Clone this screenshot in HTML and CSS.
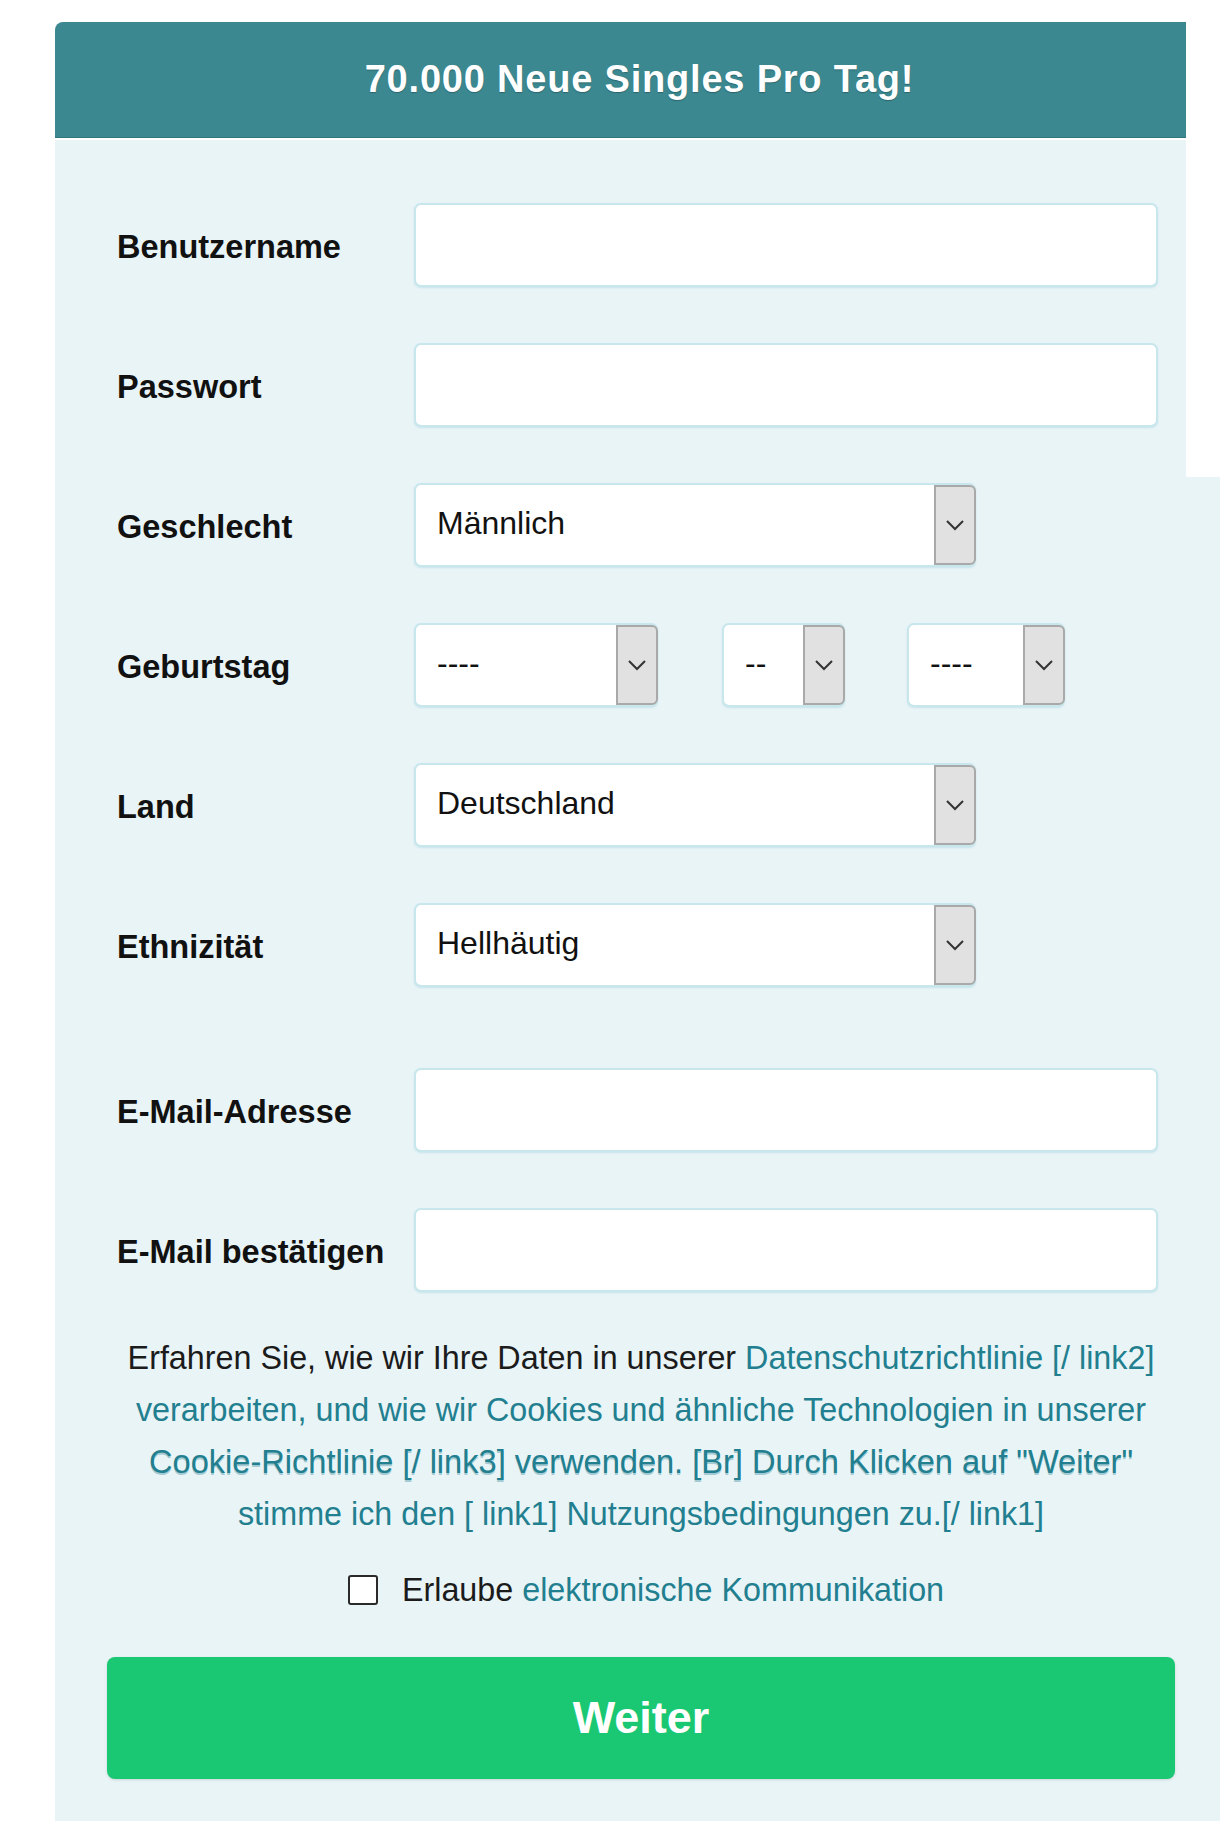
FILE: index.html
```html
<!DOCTYPE html>
<html lang="de">
<head>
<meta charset="utf-8">
<title>Registrierung</title>
<link rel="stylesheet" href="styles.css">
</head>
<body>
<div class="screen">
  <div class="card">
    <div class="card-header">70.000 Neue Singles Pro Tag!</div>
    <div class="card-body">
      <form class="form">
        <div class="row">
          <label class="label">Benutzername</label>
          <div class="input"></div>
        </div>
        <div class="row">
          <label class="label">Passwort</label>
          <div class="input"></div>
        </div>
        <div class="row">
          <label class="label">Geschlecht</label>
          <div class="select select-wide">
            <span class="value">Männlich</span>
            <span class="arrow"><svg width="20" height="12" viewBox="0 0 20 12"><path d="M2 2 L10 10 L18 2" fill="none" stroke="#333" stroke-width="2"/></svg></span>
          </div>
        </div>
        <div class="row">
          <label class="label">Geburtstag</label>
          <div class="date-group">
            <div class="select select-day">
              <span class="value">----</span>
              <span class="arrow"><svg width="20" height="12" viewBox="0 0 20 12"><path d="M2 2 L10 10 L18 2" fill="none" stroke="#333" stroke-width="2"/></svg></span>
            </div>
            <div class="select select-month">
              <span class="value">--</span>
              <span class="arrow"><svg width="20" height="12" viewBox="0 0 20 12"><path d="M2 2 L10 10 L18 2" fill="none" stroke="#333" stroke-width="2"/></svg></span>
            </div>
            <div class="select select-year">
              <span class="value">----</span>
              <span class="arrow"><svg width="20" height="12" viewBox="0 0 20 12"><path d="M2 2 L10 10 L18 2" fill="none" stroke="#333" stroke-width="2"/></svg></span>
            </div>
          </div>
        </div>
        <div class="row">
          <label class="label">Land</label>
          <div class="select select-wide">
            <span class="value">Deutschland</span>
            <span class="arrow"><svg width="20" height="12" viewBox="0 0 20 12"><path d="M2 2 L10 10 L18 2" fill="none" stroke="#333" stroke-width="2"/></svg></span>
          </div>
        </div>
        <div class="row">
          <label class="label">Ethnizität</label>
          <div class="select select-wide">
            <span class="value">Hellhäutig</span>
            <span class="arrow"><svg width="20" height="12" viewBox="0 0 20 12"><path d="M2 2 L10 10 L18 2" fill="none" stroke="#333" stroke-width="2"/></svg></span>
          </div>
        </div>
        <div class="row row-spaced">
          <label class="label">E-Mail-Adresse</label>
          <div class="input"></div>
        </div>
        <div class="row">
          <label class="label">E-Mail bestätigen</label>
          <div class="input"></div>
        </div>
      </form>

      <div class="legal">
        <p class="terms">Erfahren Sie, wie wir Ihre Daten in unserer <span class="link">Datenschutzrichtlinie [/ link2]</span><br><span class="link">verarbeiten, und wie wir Cookies und ähnliche Technologien in unserer</span><br><span class="link ghost">Cookie-Richtlinie [/ link3] verwenden. [Br] Durch Klicken auf "Weiter"</span><br><span class="link">stimme ich den [ link1] Nutzungsbedingungen zu.[/ link1]</span></p>
        <div class="consent">
          <span class="checkbox"></span>
          <span class="consent-text">Erlaube <span class="link">elektronische Kommunikation</span></span>
        </div>
        <div class="button">Weiter</div>
      </div>
    </div>
  </div>
</div>
</body>
</html>
```

FILE: styles.css
```css
html, body {
  margin: 0;
  padding: 0;
}

body {
  background: #ffffff;
  font-family: "Liberation Sans", Arial, sans-serif;
  color: #111111;
}

.screen {
  min-height: 1821px;
  padding-left: 55px;
  padding-top: 22px;
  box-sizing: border-box;
  background:
    linear-gradient(#ffffff, #ffffff) left top / 55px 100% no-repeat,
    linear-gradient(to bottom, #ffffff 477px, #e9f4f7 477px);
}

.card {
  width: 1131px;
}

.card-header {
  height: 116px;
  box-sizing: border-box;
  padding-left: 38px;
  background: #3b8890;
  border-radius: 8px 0 0 0;
  color: #ffffff;
  font-weight: bold;
  font-size: 38px;
  letter-spacing: 0.8px;
  display: flex;
  align-items: center;
  justify-content: center;
  text-shadow: 0 1px 1px rgba(0, 0, 0, 0.25);
  border-bottom: 1px solid #2f7780;
}

.card-body {
  margin-top: 2px;
  background: #e9f4f7;
  min-height: 1681px;
  padding: 63px 11px 41px 52px;
  box-sizing: border-box;
}

.form {
  display: flex;
  flex-direction: column;
  gap: 56px;
  padding-left: 10px;
  padding-right: 17px;
}

.row {
  display: flex;
  align-items: center;
  height: 84px;
}

.row-spaced {
  margin-top: 25px;
}

.label {
  width: 297px;
  flex: none;
  font-weight: bold;
  font-size: 32.5px;
  color: #111111;
  padding-top: 4px;
}

.input {
  flex: 1;
  height: 84px;
  box-sizing: border-box;
  background: #ffffff;
  border: 2px solid #c7e7ec;
  border-radius: 7px;
  box-shadow: 0 1px 2px rgba(150, 205, 215, 0.4);
}

.select {
  height: 84px;
  box-sizing: border-box;
  background: #ffffff;
  border: 2px solid #c7e7ec;
  border-radius: 7px;
  display: flex;
  align-items: stretch;
  box-shadow: 0 1px 2px rgba(150, 205, 215, 0.4);
}

.select-wide { width: 562px; }
.select-day { width: 244px; }
.select-month { width: 123px; }
.select-year { width: 158px; }

.date-group {
  display: flex;
}

.select-month { margin-left: 64px; }
.select-year { margin-left: 62px; }

.value {
  flex: 1;
  display: flex;
  align-items: center;
  padding-left: 21px;
  font-size: 32px;
  color: #111111;
  padding-bottom: 4px;
}

.arrow {
  width: 42px;
  flex: none;
  margin: 0 -2px 0 0;
  background: #e1e1e1;
  border: 2px solid #a9a9a9;
  border-radius: 0 6px 6px 0;
  display: flex;
  align-items: center;
  justify-content: center;
  box-sizing: border-box;
}

.legal {
  display: flex;
  flex-direction: column;
  align-items: center;
}

.terms {
  margin: 40px 0 0 0;
  width: 1068px;
  text-align: center;
  font-size: 32.3px;
  line-height: 52px;
  color: #1b1b1b;
}

.link {
  color: #227f8f;
}

.ghost {
  font-size: 32.6px;
  text-shadow: 0 2px 0 rgba(34, 127, 143, 0.35);
}

.consent {
  margin-top: 30px;
  height: 40px;
  display: flex;
  align-items: center;
  gap: 24px;
  padding-left: 10px;
}

.checkbox {
  width: 26px;
  height: 26px;
  border: 2px solid #2a2a2a;
  border-radius: 3px;
  background: #ffffff;
  display: block;
}

.consent-text {
  font-size: 32.3px;
  color: #1b1b1b;
}

.button {
  margin-top: 47px;
  width: 1068px;
  height: 122px;
  background: #1ac873;
  border-radius: 8px;
  color: #ffffff;
  font-weight: bold;
  font-size: 45px;
  display: flex;
  align-items: center;
  justify-content: center;
  box-shadow: 0 1px 3px rgba(0, 0, 0, 0.12);
}
```
